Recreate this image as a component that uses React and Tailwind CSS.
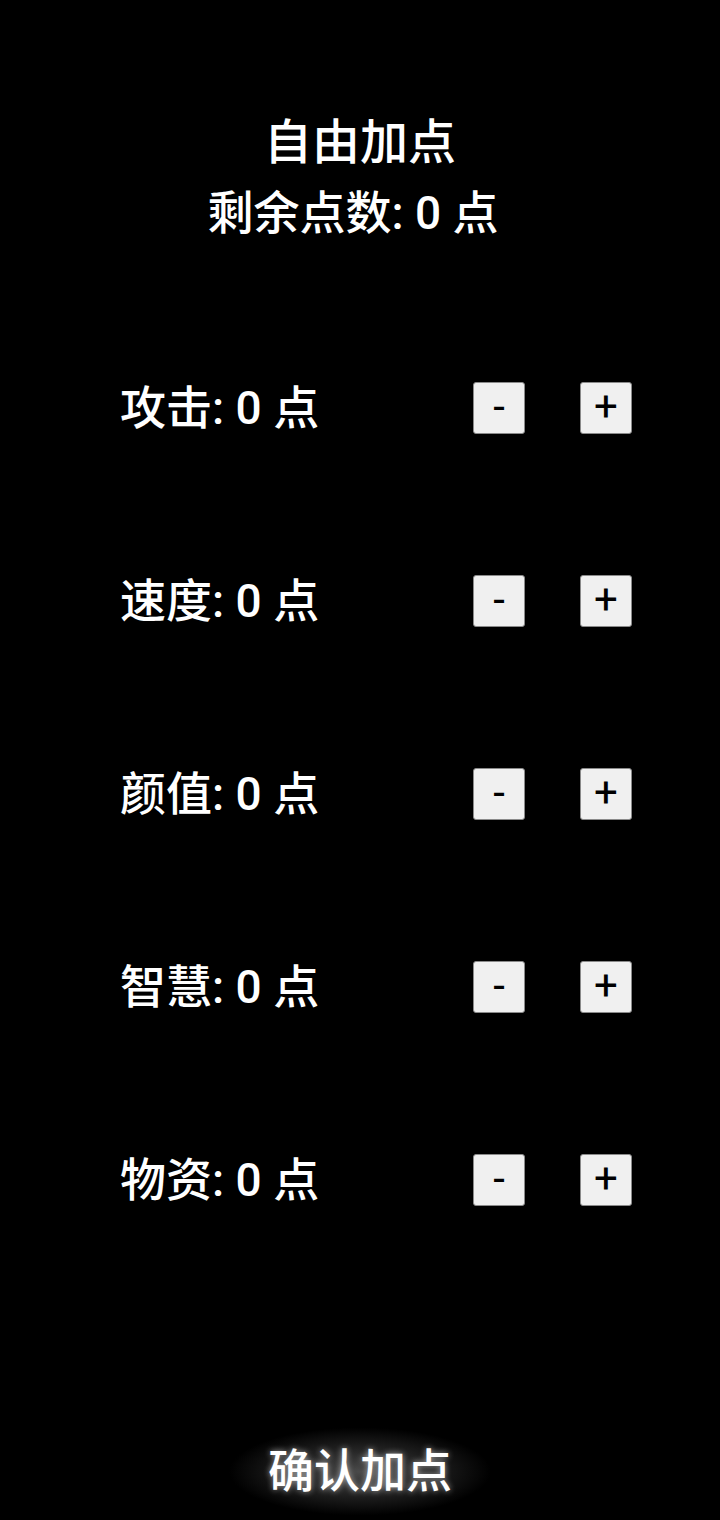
import React, { useState } from 'react';

const STATS = ['攻击', '速度', '颜值', '智慧', '物资'];

const font = { fontFamily: 'Roboto, "Noto Sans CJK SC", sans-serif' };

const StepButton = ({ children, onClick }) => (
    <button
        onClick={onClick}
        className="w-[52px] h-[52px] flex items-center justify-center bg-[#f0f0f0] border border-[#8a8a8a] rounded-[3px] text-black text-[42px] leading-none pb-[2px]"
        style={{ fontFamily: 'Roboto, sans-serif' }}
    >
        {children}
    </button>
);

export default function App() {
    const [stats, setStats] = useState(STATS.map(() => 0));
    const remaining = 0;

    const change = (i, d) => {
        setStats((prev) => prev.map((v, idx) => (idx === i ? Math.max(0, v + d) : v)));
    };

    return (
        <div className="w-[720px] h-[1520px] bg-black text-white flex flex-col items-center" style={font}>
            {/* Header */}
            <div className="pt-[107px] flex flex-col items-center">
                <h1 className="text-[48px] leading-[71px] font-medium">自由加点</h1>
                <p className="text-[46px] leading-[71px] font-medium pr-[14px]">剩余点数: {remaining} 点</p>
            </div>

            {/* Stat rows */}
            <div className="mt-[133px] w-full pl-[120px] pr-[88px] flex flex-col gap-[141px]">
                {STATS.map((name, i) => (
                    <div key={name} className="h-[52px] flex items-center justify-between">
                        <span className="text-[46px] font-medium">
                            {name}: {stats[i]} 点
                        </span>
                        <div className="flex items-center gap-[55px]">
                            <StepButton onClick={() => change(i, -1)}>-</StepButton>
                            <StepButton onClick={() => change(i, 1)}>+</StepButton>
                        </div>
                    </div>
                ))}
            </div>

            {/* Confirm */}
            <div className="mt-auto mb-[4px] px-[40px] py-[10px] bg-[radial-gradient(ellipse_at_center,#4a4a4a_0%,#1e1e1e_40%,#000_70%)]">
                <button className="text-[46px] font-medium text-white [text-shadow:0_0_6px_rgba(255,255,255,0.6)]">
                    确认加点
                </button>
            </div>
        </div>
    );
}
